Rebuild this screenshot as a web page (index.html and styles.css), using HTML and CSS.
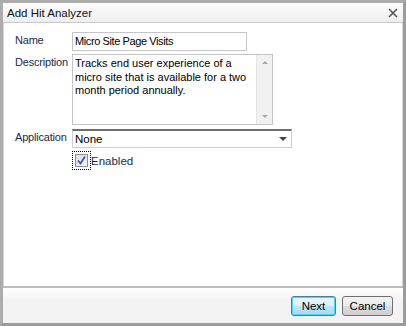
FILE: index.html
```html
<!DOCTYPE html>
<html lang="en">
<head>
  <meta charset="UTF-8" />
  <title>Add Hit Analyzer</title>
  <link rel="stylesheet" href="styles.css">
</head>
<body>
  <div class="window">
    <div class="titlebar">
      <span class="title">Add Hit Analyzer</span>
      <svg class="close" width="10" height="10" viewBox="0 0 10 10">
        <path d="M1 1 L9 9 M9 1 L1 9" stroke="#555" stroke-width="1.6" fill="none" />
      </svg>
    </div>

    <div class="content">
      <div class="row">
        <label class="lbl">Name</label>
        <div class="field name-field">Micro Site Page Visits</div>
      </div>

      <div class="row">
        <label class="lbl">Description</label>
        <div class="textarea">
          <div class="ta-text">Tracks end user experience of a micro site that is available for a two month period annually.</div>
          <div class="scroll">
            <span class="arrow up"></span>
            <span class="arrow down"></span>
          </div>
        </div>
      </div>

      <div class="row app-row">
        <label class="lbl">Application</label>
        <div class="select">
          <span>None</span>
          <span class="arrow down"></span>
        </div>
      </div>

      <div class="row check-row">
        <div class="focus">
          <div class="checkbox">
            <svg width="11" height="11" viewBox="0 0 11 11">
              <path d="M2 5.5 L4.5 8.5 L9 1.5" stroke="#3a5fa8" stroke-width="1.8" fill="none" />
            </svg>
          </div>
        </div>
        <span class="check-label">Enabled</span>
      </div>
    </div>

    <div class="footer">
      <button class="btn primary">Next</button>
      <button class="btn">Cancel</button>
    </div>
  </div>
</body>
</html>
```

FILE: styles.css
```css
body {
  margin: 0;
  font-family: "Liberation Sans", Arial, sans-serif;
  font-size: 11px;
  color: #000;
  background: #a9a9a9;
}
.window {
  width: 406px;
  height: 326px;
  box-sizing: border-box;
  border: 3px solid #acacac;
  border-right-color: #9c9c9c;
  border-bottom-color: #9c9c9c;
  display: flex;
  flex-direction: column;
  background: #fff;
}
.titlebar {
  height: 19px;
  flex: none;
  display: flex;
  align-items: center;
  justify-content: space-between;
  padding: 0 5px 0 4px;
  background: linear-gradient(#fdfdfd, #eeeeee);
  border-bottom: 1px solid #c9c9c9;
  font-size: 11.5px;
  color: #111;
}
.close {
  margin-top: 1px;
}
.content {
  flex: 1;
  padding: 9px 0 0 11px;
  border-left: 1px solid #d6d6d6;
  border-right: 1px solid #d6d6d6;
}
.row {
  display: flex;
  align-items: flex-start;
  margin-bottom: 3px;
}
.lbl {
  width: 57px;
  flex: none;
  padding-top: 2px;
  color: #1c2a4a;
  letter-spacing: -0.2px;
}
.field {
  width: 171px;
  height: 17px;
  border: 1px solid #c5c5c5;
  padding-left: 2px;
  line-height: 17px;
  letter-spacing: -0.4px;
}
.textarea {
  width: 199px;
  height: 69px;
  border: 1px solid #c5c5c5;
  display: flex;
}
.ta-text {
  flex: 1;
  padding: 2px 2px 0 2px;
  line-height: 13.5px;
}
.scroll {
  width: 16px;
  background: #f1f1f1;
  border-left: 1px solid #e4e4e4;
  display: flex;
  flex-direction: column;
  justify-content: space-between;
  align-items: center;
  padding: 6px 0 6px;
  box-sizing: border-box;
}
.arrow {
  width: 0;
  height: 0;
  border-left: 3px solid transparent;
  border-right: 3px solid transparent;
}
.arrow.up {
  border-bottom: 3px solid #a8a8a8;
}
.arrow.down {
  border-top: 3px solid #a8a8a8;
}
.app-row {
  margin-top: 4px;
}
.select {
  width: 212px;
  height: 16px;
  border: 1px solid #cfcfcf;
  border-top: 2px solid #6e6e6e;
  display: flex;
  align-items: center;
  justify-content: space-between;
  padding: 0 4px 0 2px;
  font-size: 11.5px;
}
.select .arrow.down {
  border-left-width: 4px;
  border-right-width: 4px;
  border-top: 4px solid #444;
}
.check-row {
  margin: 1px 0 0 57px;
  align-items: center;
}
.focus {
  border: 1px dotted #000;
  padding: 2px;
}
.checkbox {
  width: 11px;
  height: 11px;
  border: 1px solid #8e8f8f;
  background: linear-gradient(135deg, #d8dde6, #f4f5f7);
  display: flex;
  align-items: center;
  justify-content: center;
}
.check-label {
  color: #1c2a4a;
  font-size: 11.5px;
}
.footer {
  height: 35px;
  flex: none;
  border-top: 2px solid #bdbdbd;
  background: linear-gradient(#ffffff, #f3f3f3 12px);
  display: flex;
  justify-content: flex-end;
  align-items: center;
  gap: 6px;
  padding-right: 10px;
}
.btn {
  font-family: inherit;
  font-size: 11.5px;
  height: 20px;
  border: 1px solid #707070;
  border-radius: 3px;
  background: linear-gradient(#f2f2f2, #ebebeb 50%, #dddddd 50%, #cfcfcf);
  padding: 0;
  width: 51px;
  color: #000;
}
.btn.primary {
  width: 45px;
  border-color: #3c7fb1;
  box-shadow: inset 0 0 0 1px #48d7fb;
  background: linear-gradient(#eaf6fd, #d9f0fc 50%, #bee6fd 50%, #a7d9f5);
}
```
